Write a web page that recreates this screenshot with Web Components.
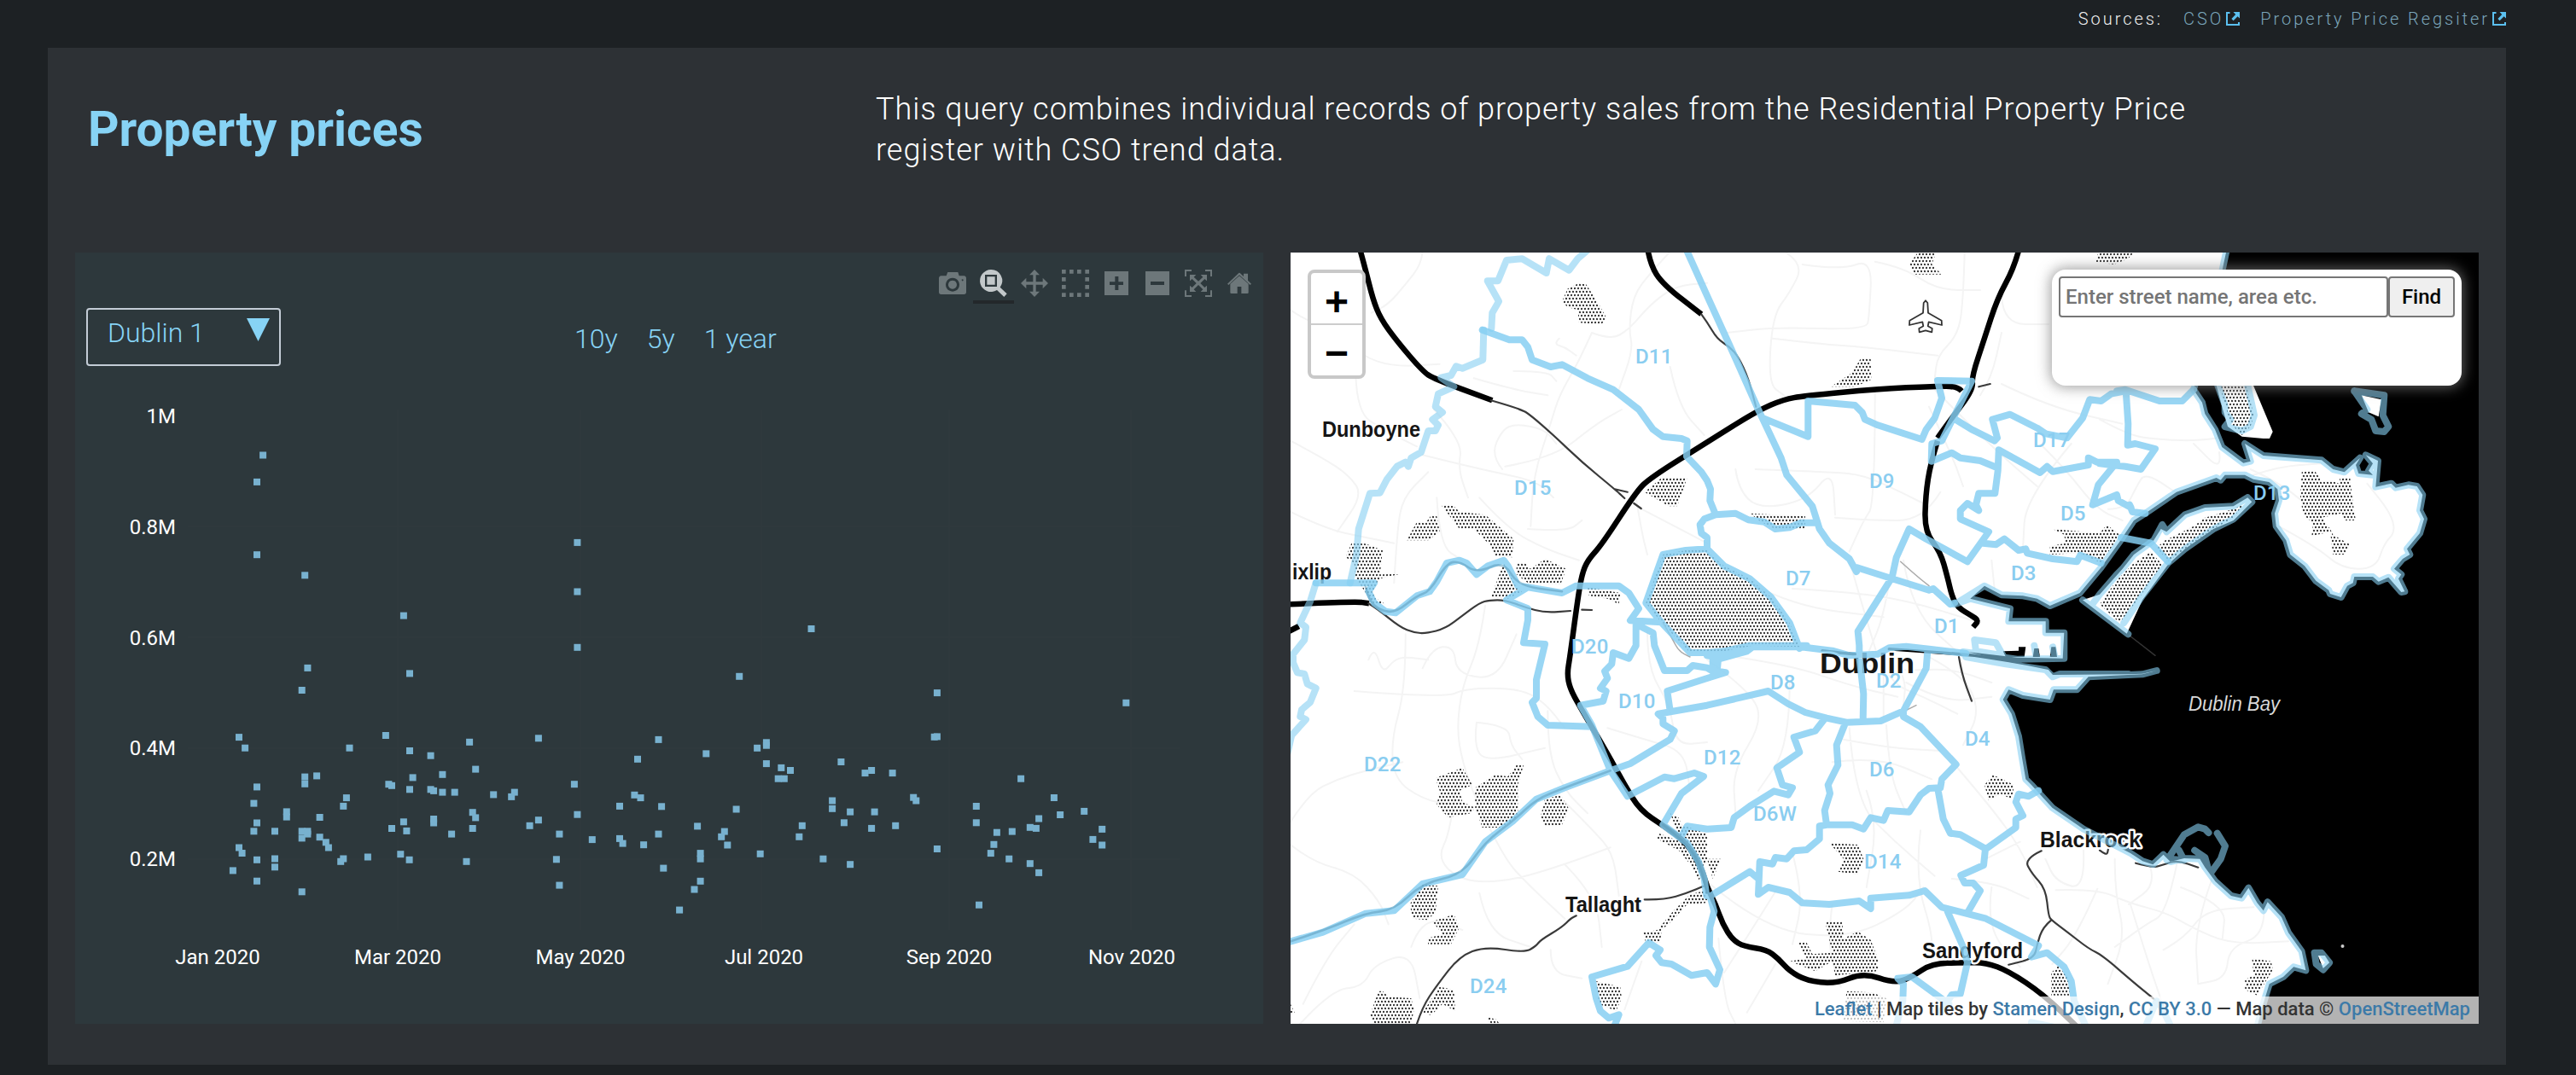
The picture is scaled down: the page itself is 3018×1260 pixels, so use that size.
<!DOCTYPE html>
<html lang="en">
<head>
<meta charset="utf-8">
<title>Property prices</title>
<style>
  html, body { margin: 0; height: 1260px; overflow: hidden; background: #1d2124; }
  body { font-family: Roboto, "Liberation Sans", sans-serif; color: #fff; }
</style>
</head>
<body>
<property-page></property-page>

<script>
const ACCENT = '#87d3f5';

/* Survey sheets: each letter is a sheet origin plus its horizontal and vertical scale. */
const SHEETS = {
  A: [1500, 290, 3, 3], B: [2000, 290, 3, 3], C: [1500, 740, 3, 3], D: [2000, 740, 3, 3],
  E: [2380, 820, 2.4577, 3], G: [2460, 420, 3, 3],
  P: [80, 460, 2.24, 2.45], Q: [780, 560, 2.24, 2.9037], Z: [0, 0, 1, 1]
};
function points(text) {
  let s = SHEETS.Z; const out = [];
  for (const t of text.trim().split(/\s+/)) {
    if (SHEETS[t]) { s = SHEETS[t]; continue; }
    const [x, y] = t.split(',').map(Number);
    out.push([+(s[0] + x / s[2]).toFixed(1), +(s[1] + y / s[3]).toFixed(1)]);
  }
  return out;
}
const line = (t, close) => 'M' + points(t).map(p => p.join(' ')).join('L') + (close ? 'Z' : '');
const lines = (list, close) => list.trim().split('\n').map(t => line(t, close)).join('');
/* Smooth variant used for roads: rounds each corner through segment midpoints. */
function smooth(t) {
  const p = points(t); let d = `M${p[0].join(' ')}`;
  for (let i = 1; i < p.length - 1; i++) {
    const m = [(p[i][0] + p[i + 1][0]) / 2, (p[i][1] + p[i + 1][1]) / 2];
    d += `Q${p[i].join(' ')} ${m.join(' ')}`;
  }
  return d + `L${p[p.length - 1].join(' ')}`;
}
const curves = list => list.trim().split('\n').map(smooth).join('');

function define(name, html) {
  customElements.define(name, class extends HTMLElement {
    constructor() {
      super();
      this.attachShadow({ mode: 'open' }).innerHTML = typeof html === 'function' ? html(this) : html;
    }
  });
}

define('source-link', `
<style>
  :host { display: flex; align-items: center; color: #7ba6bb; }
  svg { width: 16px; height: 16px; margin-left: 3px; }
</style>
<slot></slot>
<svg viewBox="0 0 16 16"><path d="M0 0H4.5V2H2V14H14V12H16V16H0Z" fill="#5bc0f0"/><path d="M8.5 0H16V7.5L13.6 5.2L8.6 10.2L6.4 8L11.2 3Z" fill="#5bc0f0"/></svg>`);

define('sources-bar', `
<style>
  :host { display: flex; justify-content: flex-end; height: 56px; padding: 8px 82px 0 0; box-sizing: border-box;
    font-size: 20px; line-height: 28px; font-weight: 300; letter-spacing: 2.95px; gap: 24px; }
  .row { height: 28px; }
  .label { color: #f0f0f0; }
</style>
<span class="row label">Sources:</span>
<source-link class="row">CSO</source-link>
<source-link class="row">Property Price Regsiter</source-link>`);

define('card-header', `
<style>
  :host { display: grid; grid-template-columns: 970px 1600px; height: 240px; }
  h1 { margin: 0; padding: 64px 0 0 47px; font-size: 56.8px; line-height: 64px; font-weight: 700; color: ${ACCENT}; }
  p { margin: 0; padding-top: 48px; font-size: 36px; line-height: 48px; font-weight: 300; letter-spacing: .99px; color: #fff; }
</style>
<h1><slot name="title"></slot></h1>
<p><slot></slot></p>`);

const GLYPHS = [
  '<path fill-rule="evenodd" d="M68 70H86L91 57H127L131 70H148Q156 71 156 79V127Q156 135 148 135H68Q60 135 60 127V79Q60 71 68 70ZM108 77a24 24 0 1 0 .1 0ZM108 86a15 15 0 1 1-.1 0ZM143 82a3 3 0 1 0 .1 0Z"/>',
  '<path fill-rule="evenodd" d="M243 48A39 39 0 1 0 264 120L289 144L299 133L275 110A39 39 0 0 0 243 48ZM222 66H264V108H222ZM229 73V101H257V73Z"/>',
  '<path d="M396 48L414 67H401V91H425V77L444 96L425 115V101H401V125H414L396 144L378 125H391V101H367V115L348 96L367 77V91H391V67H378Z"/>',
  '<path d="M492 48h14v14h-14zM519 48h14v14h-14zM546 48h14v14h-14zM574 48h14v14h-14zM492 75h14v14h-14zM574 75h14v14h-14zM492 102h14v14h-14zM574 102h14v14h-14zM492 130h14v14h-14zM519 130h14v14h-14zM546 130h14v14h-14zM574 130h14v14h-14z"/>',
  '<path fill-rule="evenodd" d="M642 54H726V138H642ZM679 72V91H660V102H679V120H691V102H708V91H691V72Z"/>',
  '<path fill-rule="evenodd" d="M786 54H870V138H786ZM804 90V102H852V90Z"/>',
  '<path d="M924 48h24v6h-18v18h-6zM996 48h24v24h-6V54h-18zM924 121h6v17h18v6h-24zM1014 121h6v23h-24v-6h18zM942 66h22l-8 8 16 15 16-15-8-8h22v22l-8-7-15 15 15 15 8-7v22h-22l8-8-16-16-16 16 8 8h-22v-22l8 7 15-15-15-15-8 7z"/>',
  '<path d="M1116 70L1148 98V129Q1148 132 1144 132H1123V108H1109V132H1088Q1084 132 1084 129V98Z"/><path d="M1074 98L1114 60Q1116 59 1118 60L1131 72V62H1146V86L1158 98L1154 102L1116 67L1078 102Z"/>'
];
define('mode-bar', `
<style>
  :host { display: flex; justify-content: flex-end; padding: 12px 4px 0 0; height: 48px; }
  svg { width: 48px; height: 44px; border-bottom: 4px solid transparent; fill: #6d777a; }
  svg.on { fill: #c2c8ca; border-color: #23282b; }
</style>
${GLYPHS.map((g, i) => `<svg class="${i === 1 ? 'on' : ''}" viewBox="${36 + 144 * i} 24 144 132">${g}</svg>`).join('')}`);

define('area-select', `
<style>
  :host { display: flex; box-sizing: border-box; width: 228px; height: 68px; border: 2px solid #c3ccd6; border-radius: 4px;
    padding: 8px 11px 0 23px; justify-content: space-between; align-items: flex-start; font-size: 32px; line-height: 38px; font-weight: 300; color: ${ACCENT}; }
  svg { width: 27px; height: 27px; margin-top: 2px; }
</style>
<span><slot></slot></span>
<svg viewBox="0 0 27 27"><path d="M0 0H27L13.5 27Z" fill="${ACCENT}"/></svg>`);

define('range-buttons', `
<style>
  :host { display: flex; gap: 34px; margin-left: 344px; padding-top: 17px; font-size: 32px; line-height: 38px; font-weight: 300; color: ${ACCENT}; }
</style>
<span>10y</span><span>5y</span><span>1 year</span>`);

const SALES = points(`P 511,180 495,257 495,466 621,525 880,641 1336,431 1336,572 1336,732 628,791 613,855 896,807 448,990 464,1021 833,985 738,1021
896,1029 951,1043 1053,1004 1234,993 1549,997 1494,1053 1069,1082 982,1097 652,1101 621,1104 621,1124 495,1133 904,1106 841,1125 849,1129 896,1140
951,1140 959,1144 982,1148 1014,1148 1116,1155 1163,1161 1171,1148 1328,1125 1486,1156 1502,1164 730,1164 722,1188 1447,1188 1557,1189 487,1180
573,1204 573,1219 660,1220 959,1225 959,1236 1061,1206 1069,1221 1336,1212 1234,1228 1211,1244 880,1233 495,1236 487,1260 542,1260 613,1260 628,1260
628,1268 613,1280 660,1277 676,1292 683,1307 849,1252 888,1259 1006,1268 1061,1252 1289,1268 1375,1284 1447,1281 1455,1295 1549,1268 1510,1299
448,1307 456,1323 786,1334 872,1326 895,1342 715,1347 722,1339 1045,1347 1281,1341 495,1342 542,1339 542,1363 432,1373 495,1403 613,1434 1289,1415 1562,1366
Q 382,514 193,676 712,732 1208,766 712,881 705,882 264,901 264,911 240,920 106,939 264,973 303,987 327,996 295,1024 311,1024 460,967 523,1005 540,996
595,1005 932,1024 1019,1089 650,1088 657,1099 437,1099 437,1126 185,1128 484,1137 548,1137 815,1118 815,1174 1035,1147 1098,1135 979,1160 83,1186
358,1184 468,1174 540,1193 603,1184 956,1190 972,1193 1145,1196 154,1204 146,1222 350,1222 869,1207 909,1204 1121,1231 162,1250 861,1248 1145,1250
91,1278 91,1297 248,1280 712,1263 853,1278 413,1297 901,1297 484,1316 956,1313 979,1344 91,1373 75,1401 36,1471 822,1454`);

define('sales-plot', `
<style>
  :host { display: block; flex: 1; min-height: 0; }
  svg { display: block; width: 1392px; height: 771px; }
  text { font: 400 24px Roboto, sans-serif; fill: #fff; }
</style>
<svg viewBox="88 429 1392 771">
  <g fill="none" stroke="#2f393d" stroke-width="2">
    <path d="M220 617H1382M220 747H1382M220 877H1382M220 1007H1382M466 480V1090M680 480V1090M892 480V1090M1112 480V1090M1325 480V1090"/>
  </g>
  <g fill="#78b1cf">${SALES.map(([x, y]) => `<rect x="${(x - 4).toFixed(1)}" y="${(y - 4).toFixed(1)}" width="8" height="8"/>`).join('')}</g>
  <g text-anchor="end">${[['1M', 496], ['0.8M', 626], ['0.6M', 756], ['0.4M', 885], ['0.2M', 1015]].map(([t, y]) => `<text x="206" y="${y}">${t}</text>`).join('')}</g>
  <g text-anchor="middle">${[['Jan', 255], ['Mar', 466], ['May', 680], ['Jul', 895], ['Sep', 1112], ['Nov', 1326]].map(([t, x]) => `<text x="${x}" y="1130">${t} 2020</text>`).join('')}</g>
</svg>`);

define('chart-panel', `
<style>
  :host { display: flex; flex-direction: column; width: 1392px; height: 904px; background: #2d383c; }
  .controls { display: flex; height: 68px; margin-top: 5px; padding-left: 13px; }
</style>
<mode-bar></mode-bar>
<div class="controls"><area-select>Dublin 1</area-select><range-buttons></range-buttons></div>
<sales-plot></sales-plot>`);

define('zoom-control', `
<style>
  :host { display: block; box-sizing: border-box; width: 68px; height: 128px; border: 4px solid #c8c8c8; border-radius: 8px; background: #fff; background-clip: padding-box; }
  div { height: 59px; text-align: center; font: 700 48px/67px "Liberation Sans", sans-serif; color: #000; }
  div + div { border-top: 2px solid #ccc; line-height: 65px; }
</style>
<div>+</div><div>−</div>`);

define('street-search', `
<style>
  :host { display: flex; align-items: flex-start; box-sizing: border-box; width: 480px; height: 136px; padding: 8px; background: #fff; border-radius: 16px; box-shadow: 0 0 16px 2px rgba(128,128,128,.75); font-weight: 500; font-size: 24px; }
  span { box-sizing: border-box; height: 48px; line-height: 44px; border: 2px solid #767676; border-radius: 4px; white-space: nowrap; }
  .field { width: 386px; padding-left: 6px; color: #757575; background: #fff; }
  .go { width: 78px; text-align: center; color: #000; background: #efefef; }
</style>
<span class="field">Enter street name, area etc.</span><span class="go">Find</span>`);

define('map-credits', `
<style>
  :host { display: block; height: 32px; box-sizing: border-box; padding: 0 10px; background: rgba(255,255,255,.7); font-size: 22px; line-height: 30px; font-weight: 500; color: #333; white-space: nowrap; }
  a { color: #3c7aa8; }
</style>
<a>Leaflet</a> | Map tiles by <a>Stamen Design</a>, <a>CC BY 3.0</a> — Map data © <a>OpenStreetMap</a>`);

const SOUTH_COAST = 'E 652,1140 665,1080 685,1000 725,975 755,940 790,952 778,885 740,820 720,765 680,712 668,742 650,715 625,662 605,698 575,690 530,640 500,590 485,560 440,558 400,570 380,545 350,580 320,568 285,540 150,455 60,380 0,300 D 1120,520 1108,450 1095,370 1070,290 1040,240 1060,205 1110,225 1205,240 1218,205 1300,205 1340,160 1480,153 G 150,1111 200,1098';
const NORTH_COAST = 'B 870,1255 975,1190 1035,1222 1110,1225 1160,1235 1205,1260 1310,1215 1385,1125 1450,1035 1500,960 G 160,545 270,470 410,420 425,428 440,410 510,410 540,425 595,435 625,460 630,500 615,545 620,590 655,640 670,690 720,730 760,782 805,815 810,828 848,840 870,800 890,790 895,768 960,768 980,785 1015,770 1060,822 1072,820 1050,775 1060,760 1035,740 1065,705 1090,690 1080,670 1125,615 1140,565 1125,535 1135,480 1115,450 1085,445 1040,455 1025,440 970,452 978,360 935,340 960,370 945,395 960,410 910,405 900,375 915,350 860,400 820,390 780,358 700,352 575,342 510,300 530,362 505,368 430,312 405,250 370,195 360,155 330,110 Z 2590,380 2608,296';

define('district-map', `
<style>
  :host { display: block; position: relative; width: 1392px; height: 904px; background: #fff; overflow: hidden; }
  svg { display: block; width: 1392px; height: 904px; }
  zoom-control { position: absolute; left: 20px; top: 20px; }
  street-search { position: absolute; right: 20px; top: 20px; }
  map-credits { position: absolute; right: 0; bottom: 0; }
  .district { font: 500 24px Roboto, sans-serif; letter-spacing: .2px; fill: #8acdf0; }
  .town { font: 700 25px "Liberation Sans", sans-serif; fill: #151515; stroke: #fff; stroke-width: 5px; paint-order: stroke; stroke-linejoin: round; }
  .city { font-size: 34px; }
  .bay { font: italic 400 23px "Liberation Sans", sans-serif; fill: #d8d8d8; }
</style>
<svg viewBox="1512 296 1392 904" fill="none" stroke-linejoin="round" stroke-linecap="round">
  <defs><pattern id="dots" width="4" height="8" patternUnits="userSpaceOnUse"><circle cx="1" cy="2" r="1.15" fill="#333"/><circle cx="3" cy="6" r="1.15" fill="#333"/></pattern></defs>

  <path stroke="#f4f4f4" stroke-width="2" d="${curves(`A 500,15 495,60 440,130 380,200 320,230
A 36,220 100,265 200,280 280,380 400,420 560,410
A 265,450 270,580 360,640 480,700
A 36,680 150,740 240,800 290,870 200,1000
A 36,930 160,990 300,1020 400,1040
A 1370,15 1300,90 1240,170 1225,290 1240,360 1190,500
A 1095,300 1160,325 1225,290 1300,200 1390,135 1500,125
A 1095,300 1050,400 980,520 950,620 890,800 880,980
A 980,320 960,340 1000,350 1040,380
A 680,460 820,500 940,520
A 820,435 940,435 970,470
A 540,570 640,680 625,780 660,880
A 500,730 700,780 900,820 960,880
A 780,780 740,730 780,640 830,620 930,640 970,690
A 790,770 960,740 1110,620 1200,570
A 400,1180 410,1000 430,880 520,790
A 550,880 560,1050 640,1100
A 700,880 800,990 930,1060 1050,1100
A 870,990 1010,1000 1060,960
A 1250,880 1270,1000 1290,1080
A 1370,420 1400,560 1490,660
A 1270,920 1500,1040
A 720,1260 700,1400 C 640,190 620,340 640,460 690,600 790,800 860,880 1000,1010
C 36,670 100,570 200,520 300,490 430,460
C 36,750 110,810 260,850 350,950 380,1030
C 260,210 580,235 650,200 840,200 930,250 1000,340
C 440,10 440,200 390,380 400,520 500,590 600,610
C 310,100 330,50 360,150 400,100 440,90 520,100
C 500,130 530,60 610,50 620,150 760,170 830,10
C 690,320 800,330 810,400 850,450
C 690,320 680,400 720,460 930,410
C 620,520 600,700 550,800 640,880 800,880 1000,820 1160,760
C 1000,600 1100,700 1170,780 1190,930
C 700,920 730,1060 880,1110
C 1000,820 1110,930 1130,1110
C 950,1120 950,1200 1060,1220
C 80,1310 160,1150 260,1030
C 70,1380 180,1260 290,1250 330,1170 460,1130 490,1290
C 460,1110 500,1000 640,1050
C 1210,1330 1270,1160
C 940,280 940,430 1000,560 1080,640
C 1290,0 1290,130 1370,260 1390,400 1500,390
C 1150,340 1280,380 1420,420 1440,560
B 280,20 340,60 290,160 230,240 215,480 270,520
B 335,60 470,80 580,40 570,240 560,290 240,280 70,300
B 590,50 690,70 810,150 960,150
B 905,20 900,200 880,310 810,380 800,460
B 230,320 400,340 550,350 810,380
B 590,500 590,900 550,960 500,1070
B 170,780 440,790 550,800 680,860 760,900
B 100,780 110,850 180,920 350,890 440,780 450,940
B 1035,170 1040,270 1200,270
B 1035,480 1200,560 1460,620
B 960,520 1000,460 1035,300
B 800,500 860,560 1000,700 1160,840
B 1280,690 1120,880 1110,1060
B 820,860 760,960 580,960 450,950
B 780,560 860,730 900,840
B 1180,700 1260,780 1370,920 1460,960
B 300,1200 480,1210 700,1240 960,1320
B 150,1180 300,1260 620,1300
B 500,1100 540,1240 600,1440
B 690,1100 720,1280 900,1440
B 640,1180 620,1300 560,1440
B 1000,1100 1010,1200
D 600,80 640,180 760,230 880,290
D 560,120 690,140 860,130 1000,180
D 640,60 700,160 690,260
D 760,80 900,150 960,280 900,400
D 700,180 830,250 1000,230
D 620,140 620,300
D 100,90 300,120 500,190 670,230
D 0,100 140,200 200,310 90,490 100,640
D 290,180 290,400 180,560
D 500,340 520,600 660,740 800,860
D 440,460 600,440 790,520
D 480,380 640,410 820,420
D 630,330 640,500 700,640
D 880,480 1000,620 1100,760 1160,900
D 560,560 600,670 560,900
D 750,700 730,860 800,1090 770,1160
D 300,780 340,930 300,1100
D 0,880 200,1050 500,1080 700,980 760,900
D 860,870 1000,880 1130,940
D 980,800 1100,740
D 40,1080 60,1300 100,1380
D 240,1170 140,1340
D 440,960 420,1100 470,1250
D 250,900 150,1060 60,1200
D 1000,900 980,1040 1100,1180
E 150,530 155,670 70,640 40,560
E 70,670 190,665 280,715 390,750 460,800 570,860 740,850
E 240,560 240,680 270,830 220,1000
E 190,665 130,830 60,930
E 285,720 330,900 380,1080
E 340,580 360,650 280,720
E 420,570 390,750 330,790 240,870
E 520,630 470,800 480,1000
E 380,880 440,840 500,740 640,730
E 670,740 670,830 570,870 560,980 480,1000
E 430,660 560,720 550,840
G 0,215 100,270 200,285 330,290 420,280
G 420,330 430,400 330,300
G 30,530 90,530 130,450 160,400 280,480
G 530,390 640,440 780,560
G 610,580 760,660 850,740 970,740 1000,650 1040,610 1020,540 940,440
G 540,410 630,380 780,370`)}"/>

  <g fill="url(#dots)">
    <path d="${lines(`A 1050,125 1075,130 1120,200 1145,245 1130,270 1050,265 1045,220 1010,210 990,190 1010,145
A 565,905 610,910 630,930 720,940 820,1025 815,1090 755,1085 735,1045 705,1015 680,990 630,990
A 480,965 510,970 530,942 550,945 560,1000 520,1030 445,1030
A 1340,810 1430,810 1395,910 1365,910 1280,860
A 250,1040 300,1042 360,1065 350,1150 420,1148 350,1165 330,1200 330,1230 370,1255 330,1255 300,1215 265,1160 260,1110 230,1090
A 785,1110 830,1195 850,1210 800,1235 740,1230
A 830,1110 860,1110 880,1130 930,1095 1005,1130 985,1185 870,1180 830,1150
A 1080,1195 1195,1215 1190,1255 1150,1235 1085,1225
A 1500,1060 1425,1065 1345,1080 1285,1250 1340,1320 1440,1425 B 60,1420 160,1400 325,1405 290,1320 225,1230 150,1165 60,1120 0,1070
B 740,18 805,18 790,60 825,95 730,95 710,60
B 1375,18 1500,18 1480,40 1430,60 1365,50
B 540,390 575,390 577,465 520,490 435,490 510,440
B 150,935 345,945 345,990 240,990 190,965
B 1205,1080 1205,1050 1260,1040 1255,1010 1215,990 1380,1005 1405,975 1450,1010 1385,1110 1310,1075
C 545,515 640,480 675,540 630,560 640,600 685,620 670,640 590,655 550,610 560,560
C 685,550 755,505 800,510 830,470 855,470 835,540 835,650 780,690 710,690 685,620
C 930,590 985,575 1015,625 990,680 930,685 915,650
C 500,890 555,895 545,990 515,1015 465,1010 455,960
C 535,1020 610,995 630,1040 600,1100 520,1100 515,1080 570,1065
C 345,1265 360,1265 380,1285 460,1290 470,1330 460,1380 330,1380 315,1350
C 560,1250 610,1260 615,1335 570,1310 530,1350 500,1340
C 1370,640 1400,655 1410,680 1500,710 1500,800 1470,880 1450,830 1400,770 1325,730 1330,710 1410,740
C 1500,910 1500,955 1430,960 1380,1015 1340,1050 1335,1095 1285,1095 1275,1060 1325,1050 1380,985 1440,925
C 1110,1230 1195,1250 1200,1290 1180,1335 1120,1310
C 725,1355 760,1365 770,1380 735,1380
C 36,1310 50,1340 36,1350
D 975,540 1005,505 1080,540 1070,590 1030,570 990,595
D 430,745 530,750 550,800 530,855 460,845 480,800
D 415,1020 475,1020 480,1080 530,1055 575,1085 600,1150 600,1195 450,1210 440,1160 380,1195 290,1160 350,1150 320,1095 350,1095 370,1135 440,1130
D 0,800 50,800 20,870
D 490,1265 580,1270 630,1290 620,1375 480,1370
D 1235,1175 1270,1220 1275,1280 1210,1280 1210,1200
E 635,910 690,920 695,950 650,1040 615,1020 615,985 640,970`, true)}"/>
  </g>

  <path fill="#000" d="${line('Z 2608,296 2904,296 2904,1200 ' + SOUTH_COAST + ' G 150,1109 D 1480,151 1215,153 1195,130 1050,105 915,72 1090,92 1250,95 B 1255,1355 1190,1355 1190,1315 1060,1315 1065,1270 925,1235 ' + NORTH_COAST.replace('B 870,1255', 'B'), true)}"/>
  <path fill="#fff" d="${lines(`G 520,490 470,520 370,525 300,550 235,610 215,600 190,640 120,690 80,740 0,830 -60,850 95,968 150,850 240,725 300,670 400,600 470,570 535,505
G 410,95 430,170 450,240 500,275 575,282 597,282 608,258 540,95
G 920,130 990,145 980,205 945,190
E 825,900 845,900 858,925 840,945`, true)}"/>
  <g fill="url(#dots)">
    <path d="${lines(`G 505,515 440,540 370,560 330,590 230,640 200,665 240,715 300,670 400,600 470,560
G 180,680 220,725 140,840 70,930 0,865 60,780 120,720
G 420,95 440,160 460,230 500,270 530,240 542,200 515,95
G 710,400 755,395 780,430 815,430 840,440 845,420 880,420 890,510 900,570 860,570 850,545 780,560 810,600 820,620 880,655 860,690 820,690 810,610 745,625 750,580 715,550 705,490`, true)}"/>
  </g>
  <path fill="#000" stroke="none" d="${lines(`B 1040,1420 1095,1418 1095,1405 1120,1405 1115,1440 1050,1440
D 1150,60 1165,60 1170,90 1145,90
D 1210,55 1225,55 1230,90 1205,90`, true)}"/>

  <g stroke="#000" stroke-width="6.5" stroke-linecap="butt">
    <path d="${curves(`A 278,0 300,80 325,180 352,250 410,330 500,435 540,462 745,538
A 1290,0 1300,60 1345,130 1480,235
A 30,1255 265,1245 312,1252
A 30,1350 65,1332
B 1098,0 1080,70 1020,180 975,320 930,455 935,500 860,600 810,670
B 810,680 785,760 768,870 765,1000 820,1070 845,1160 860,1225 880,1265 930,1295 955,1312 935,1335
B 895,505 880,488 800,488 600,498 340,522 270,535 180,572 0,685 A 1300,810 1250,860 1130,1045 1080,1100 1060,1150 1045,1240 1018,1440 C 1008,150 1018,200 1050,260 1150,430 1210,540 1265,630 1350,685 1430,745 1480,830 1500,900 D 30,960 55,1030 90,1085 130,1108 210,1120 250,1150 290,1195 350,1228 450,1240 550,1200 660,1238 720,1215 790,1168 900,1165 980,1165 1060,1195 1180,1275 1300,1390`)}"/>
  </g>
  <path stroke="#000" stroke-width="3.5" d="${curves(`D 640,62 780,72 920,82 1060,102 1200,130
D 405,68 470,76 520,80`)}"/>
  <g stroke="#3a3a3a" stroke-width="2.2">
    <path d="${curves(`A 740,538 845,568 880,590 960,660 1060,755 1175,850 1210,882
A 1175,850 1220,860
A 1243,900 1268,918
A 1480,235 B 0,262 35,322 80,350 110,385 145,460 172,560
A 310,1252 340,1270 420,1335 470,1355 515,1357 580,1340 640,1295 700,1250 735,1240 790,1240 860,1265 930,1285 1020,1278
A 1060,1274 1095,1275
C 480,1380 500,1320 550,1245 630,1142 720,1108 860,1130 900,1105 915,1085 990,1040 1020,1010 1040,1000
C 1280,943 1350,944 1430,920 1490,895
D 1175,772 1115,800 1140,850 1190,905 1200,1000 1210,1015 1270,1060 1340,1115 1390,1140 1500,1235 E 355,1055
D 1210,1015 1180,1040 1160,1100 1150,1150 1060,1172
D 885,90 895,150 930,245
D 1380,770 1405,790 1410,765
E 300,575 350,592 380,580 420,565 480,590
B 955,490 995,480`)}"/>
  </g>
  <path stroke="#aaa" stroke-width="1.5" d="${curves(`A 1345,1320 1375,1370 1400,1420 1440,1440
B 680,1105 730,1150 780,1190
D 705,275 735,260`)}"/>
  <path stroke="#333" stroke-width="1.5" d="${line('G 105,975 195,1045')}"/>

  <g class="town">
    <text x="1549" y="512" textLength="115" lengthAdjust="spacingAndGlyphs">Dunboyne</text>
    <text x="1514" y="679" textLength="46" lengthAdjust="spacingAndGlyphs">ixlip</text>
    <text x="1834" y="1069" textLength="89" lengthAdjust="spacingAndGlyphs">Tallaght</text>
    <text x="2390" y="993" textLength="118" lengthAdjust="spacingAndGlyphs">Blackrock</text>
    <text x="2252" y="1123" textLength="118" lengthAdjust="spacingAndGlyphs">Sandyford</text>
    <text class="city" x="2132" y="789" textLength="111" lengthAdjust="spacingAndGlyphs">Dublin</text>
  </g>
  <text class="bay" x="2564" y="833" textLength="107" lengthAdjust="spacingAndGlyphs">Dublin Bay</text>

  <g stroke="#85cef2" stroke-width="8" stroke-opacity=".6">
    <path d="${lines(`A 1080,10 1045,40 1015,80 945,40 935,90 850,40 795,45 765,118 728,118 768,190 745,230 742,285
A 715,290 712,395 640,425 618,418 600,450 565,458 610,490 555,515 545,560 570,580 535,605 555,625 545,645 520,645 495,720 460,740 450,770 440,755 410,770 375,815 350,863 315,865 275,990 268,1080 245,1180
A 125,1180 105,1245 70,1320 90,1335 85,1380 45,1430 C 45,110 60,145 85,150 95,185 125,200 105,250 75,275 70,300 90,310 40,365 25,430
${SOUTH_COAST}
${NORTH_COAST}
D 900,72 1090,98 1255,95 1255,5 B 1190,1355 1190,1315 1060,1315 1065,1270 925,1235 870,1255
D 940,30 945,70 1040,85 1015,40 940,30
D 1150,50 1155,80
D 1215,55 1220,80
D 910,90 1050,115 1190,135 1215,160 1240,150 1480,150
G 520,490 470,520 370,525 300,550 235,610 220,585 190,640 120,690 80,740 60,760 0,830 -30,870
G -60,850 100,970
G 85,930 150,835 240,720 300,670 400,600 470,565 535,505 520,490
G 415,95 440,165 440,190 460,215 440,240 500,255 530,240 543,200 520,95
G 895,115 1000,130 995,200 1015,240 1000,258 970,255 955,215 920,195 940,180 895,115
E 390,565 440,475 480,448 500,455 510,468
E 535,470 558,515 545,560 515,612
E 470,530 500,555 510,600
E 425,530 440,565 395,560
E 815,890 835,890 858,925 840,950 820,930 815,890`)}"/>
  </g>
  <g stroke="#85cef2" stroke-width="8" stroke-opacity=".84">
    <path d="${lines(`A 710,290 805,325 850,325 870,350 885,395 950,420 990,412 1080,460 1170,500 1260,570 1310,640 1345,665 1410,672 1430,680 1428,735 1480,790 1500,820 B 12,850 10,890 30,940 100,935 145,958 200,965 240,990 290,985 330,968 375,968
B 30,940 -10,955 -25,975 -20,1005 0,1020 0,1060
A 1500,1060 1425,1065 1345,1080 1285,1250 1340,1320 1440,1425 1500,1425 B 60,1420 150,1400 350,1400
B 0,1060 60,1120 150,1165 225,1230 290,1320 325,1410
A 1428,10 B 0,170 100,390 180,570 260,740 280,800 370,910 395,990 430,1040 500,1095 525,1140
B 525,1125 650,1165 780,1205 795,1200 855,1255 870,1250
B 195,600 355,665 355,540 520,555 545,580 555,605 600,625 755,675 770,640 800,600 825,530 810,468 930,470 865,600 825,680 790,690 788,752 860,722 890,740 960,750 1020,775
B 865,600 930,640 1010,680 1020,670 1003,605 1065,587 1160,635 1190,655 1265,670 1320,600 1345,535 1385,540 1420,515 1470,505 G 60,115 90,110 210,150 290,150 330,110
G 92,115 100,230 98,305 125,300 195,318 145,390 90,380 40,375 0,370
B 915,1105 990,1000 890,955 890,925 915,900 955,925 945,905 955,865 1012,865 1022,785 1025,712 1170,792 1195,770 1215,788 1340,765 1340,740 1370,755 1440,755 1375,835 1355,905 1440,870 1445,890 1490,915 G 105,515 115,540 160,545
B 915,1105 770,1025 710,990 665,1090 650,1160 530,1350 535,1400 D 535,90 550,220 548,310
B 970,1040 1015,1045 1045,1025 1095,1065 1120,1060 1125,1075 1215,1095 1300,1105 1312,1082 1385,1110
G 75,630 180,650 240,715
D 160,55 330,55 440,68 500,85 600,80 640,58 700,53 780,62 910,78
A 125,1180 245,1180 330,1180 310,1210 330,1250 370,1280 405,1285 480,1225 525,1210 550,1175 585,1110 630,1100 655,1110 690,1150 730,1120 785,1100 800,1120 835,1190 870,1195 990,1215 1040,1190 1190,1190 1225,1215 1260,1270 1230,1312 1340,1318
A 870,1195 795,1240 870,1270 870,1310 855,1390 930,1395 C 900,170 900,235 885,250 905,300 940,330 1095,335
A 1250,1320 1250,1400 1225,1445 1170,1425 C 1165,115 1140,140 1150,165 1125,200 1145,210 1135,245 1055,260 1095,330 1160,490 1220,580 1350,512 1385,518 1455,498 1488,510 1410,570 1345,680
A 1260,1330 1310,1355 C 1315,50 1350,138 1430,138 1450,120 1500,128 D 20,140 20,90 40,90 35,140 65,145 0,165 C 1360,210 1370,280
C 1160,490 1230,465 1370,380 1385,350 1345,325 1345,305 1328,290 1500,260 D 215,210 285,255 345,285 420,305 490,320 610,315 690,280
D 0,85 50,95 140,70 160,55
D 415,305 380,350 305,372 325,425 245,480 265,540 300,550 285,575 235,562 150,615 95,655 85,690 0,695 C 1430,685 1410,720
D 485,325 455,400 460,470 425,540 432,570 413,630 420,680 395,685 395,730 350,768 305,772 280,800 240,795 230,818 185,810 180,925 215,900 290,918 335,955 430,960 535,948 575,975 575,938 710,928 765,912 825,970 980,1010 1165,1105 1140,1145 1195,1130 1255,1180 1280,1230 1290,1300 1330,1385
D 420,680 510,680 550,695 575,655 620,665 635,630 710,635 750,575 780,552 820,550 825,520 875,468 750,335 690,300 690,280 770,130 775,70
D 812,560 830,660 855,710 890,715 980,765 1085,690 1085,660 1110,648 1085,600 1095,572 1130,580 1165,560
D 978,765 972,822 892,858 905,885 935,885 960,912 915,990
D 845,985 900,1110 915,1165 890,1275 860,1278 820,1340
D 850,1310 720,1215 670,1220 690,1240 688,1300 665,1385
D 180,870 150,845 20,925
C 1345,680 1430,745 1470,810 1490,870 1498,930 D 10,930 25,985 10,1040 8,1110 45,1190 30,1240 0,1200 C 1445,1210 1375,1170 1340,1165 1320,1140 1335,1120 1295,1095 1220,1178 1095,1215 1110,1290 1125,1335 1155,1360 1190,1348 1175,1385
C 20,1095 150,1058 300,992 400,982 500,888 640,855 720,740 820,665 900,590 1000,550 1160,490
E 60,1150 0,1135
E 360,1060 330,1145
E 370,1070 400,1145`)}"/>
  </g>
  <path stroke="#5d9dbb" stroke-opacity=".55" stroke-width="2.6" d="${curves(`C 20,1095 150,1053 300,990 400,980 500,885 640,855 720,740 820,665 900,590 1000,550 1160,490
C 1345,680 1430,745 1480,830 1498,920
A 300,1195 310,1240 350,1275 405,1285 480,1225 525,1210 585,1110 630,1103 690,1145 785,1103 835,1190 990,1210`)}"/>

  <g class="district">${[['D11', 1916, 425.5], ['D15', 1774, 580], ['D20', 1841, 766], ['D10', 1896, 830], ['D22', 1598, 904], ['D24', 1722, 1164], ['D9', 2190, 572], ['D7', 2092, 686], ['D1', 2266, 742], ['D3', 2356, 680], ['D5', 2414, 610], ['D17', 2382, 524], ['D13', 2640, 586], ['D8', 2074, 808], ['D2', 2198, 806], ['D12', 1996, 896], ['D6', 2190, 910], ['D4', 2302, 874], ['D6W', 2054, 962], ['D14', 2184, 1018]].map(([t, x, y]) => `<text x="${x}" y="${y}">${t}</text>`).join('')}</g>

  <path fill="#fff" stroke="#333" stroke-width="1.8" d="${line('B 768,187 761,195 759,230 712,257 711,273 757,262 760,277 745,285 746,298 768,292 790,298 791,285 776,277 779,262 825,273 824,257 777,230 775,195', true)}"/>
  <circle cx="2744.5" cy="1109" r="2" fill="#ccc"/>
</svg>
<zoom-control></zoom-control>
<street-search></street-search>
<map-credits></map-credits>`);

define('query-card', `
<style>
  :host { display: flex; flex-direction: column; box-sizing: border-box; width: 2880px; height: 1192px; margin-left: 56px; background: #2d3135; }
  .panels { display: flex; gap: 32px; padding: 0 32px; }
</style>
<card-header><span slot="title">Property prices</span><slot></slot></card-header>
<div class="panels"><chart-panel></chart-panel><district-map></district-map></div>`);

define('property-page', `
<style>:host { display: flex; flex-direction: column; width: 3018px; height: 1260px; background: #1d2124; }</style>
<sources-bar></sources-bar>
<query-card>This query combines individual records of property sales from the Residential Property Price register with CSO trend data.</query-card>`);
</script>
</body>
</html>
